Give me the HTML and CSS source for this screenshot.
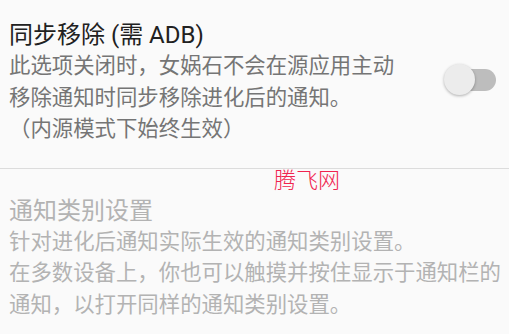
FILE: index.html
```html
<!DOCTYPE html>
<html lang="zh-CN">
<head>
    <meta charset="UTF-8">
    <meta name="viewport" content="width=device-width, initial-scale=1.0">
    <title>同步移除</title>
    <link rel="stylesheet" href="styles.css">
</head>
<body>

<div class="pref pref-first">
    <div class="pref-text">
        <div class="pref-title">同步移除 (需 ADB)</div>
        <div class="pref-summary">此选项关闭时，女娲石不会在源应用主动<br>移除通知时同步移除进化后的通知。<br>（内源模式下始终生效）</div>
    </div>
    <div class="switch">
        <div class="switch-track"></div>
        <div class="switch-thumb"></div>
    </div>
</div>

<div class="pref pref-disabled">
    <div class="pref-text">
        <div class="pref-title">通知类别设置</div>
        <div class="pref-summary">针对进化后通知实际生效的通知类别设置。<br>在多数设备上，你也可以触摸并按住显示于通知栏的<br>通知，以打开同样的通知类别设置。</div>
    </div>
</div>

<div class="watermark">腾飞网</div>

</body>
</html>
```

FILE: styles.css
```css
body {
    margin: 0;
    background-color: #fafafa;
    font-family: Roboto, "Noto Sans CJK SC", sans-serif;
    position: relative;
    height: 334px;
    overflow: hidden;
}

.pref {
    display: flex;
    align-items: center;
    padding: 0 13px 0 9px;
}

.pref-first {
    padding-top: 20px;
    padding-bottom: 23px;
    border-bottom: 1px solid #dcdcdc;
}

.pref-disabled {
    padding-top: 27px;
}

.pref-text {
    flex: 1;
}

.pref-title {
    font-size: 24px;
    line-height: 30px;
    color: #212121;
    white-space: nowrap;
}

.pref-summary {
    font-size: 21.4px;
    line-height: 31.5px;
    color: #757575;
    white-space: nowrap;
}

.pref-disabled .pref-title,
.pref-disabled .pref-summary {
    color: #b3b3b3;
}

.switch {
    position: relative;
    width: 52px;
    height: 32px;
    margin-bottom: 5px;
}

.switch-track {
    position: absolute;
    left: 1px;
    top: 5px;
    width: 51px;
    height: 22px;
    border-radius: 11px;
    background-color: #bdbdbd;
}

.switch-thumb {
    position: absolute;
    left: 0;
    top: 0;
    width: 31px;
    height: 31px;
    border-radius: 50%;
    background-color: #ececec;
    box-shadow: 0 1px 3px rgba(0, 0, 0, 0.3);
}

.watermark {
    position: absolute;
    left: 274px;
    top: 164px;
    font-family: "Noto Sans CJK SC", sans-serif;
    font-size: 22px;
    font-weight: 300;
    line-height: 28px;
    color: #f0244f;
}
```
